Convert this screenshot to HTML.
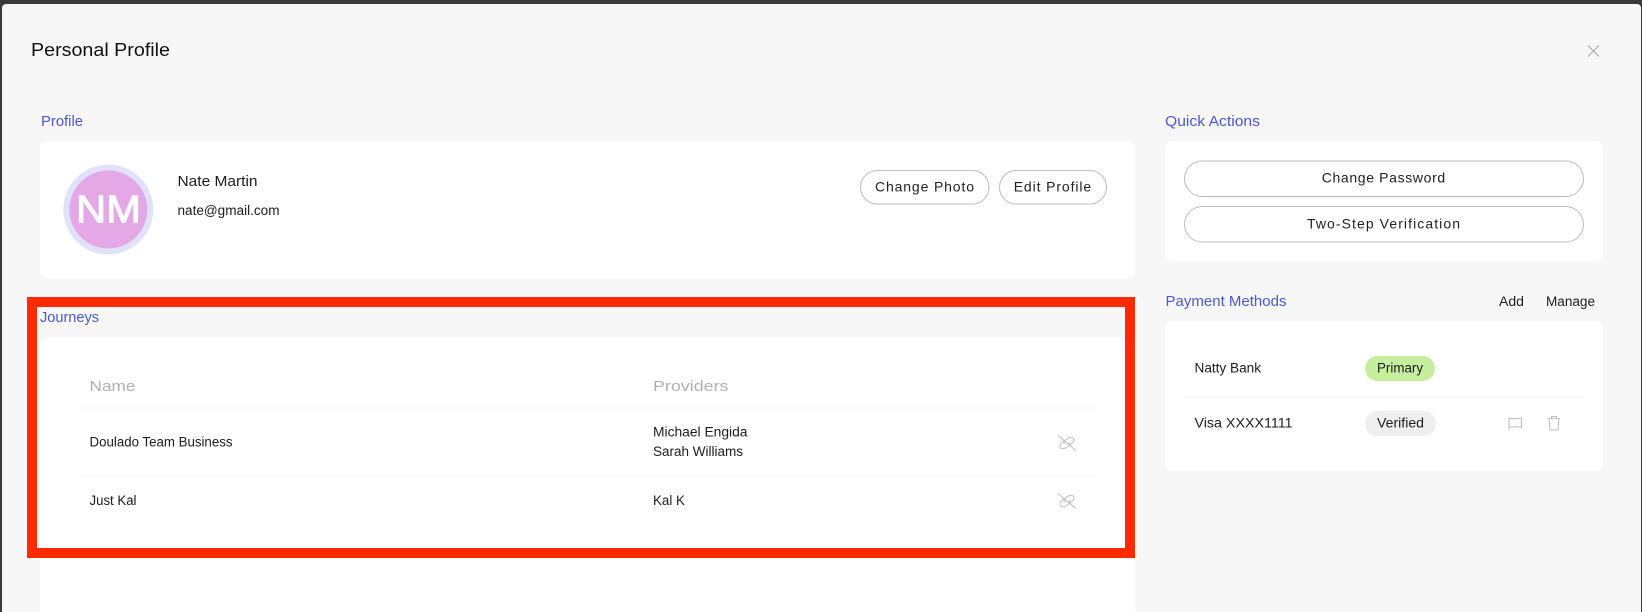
<!DOCTYPE html>
<html lang="en">
<head>
<meta charset="utf-8">
<title>Personal Profile</title>
<style>
html,body{margin:0;padding:0;width:1642px;height:612px;overflow:hidden;background:#3a3a3a}
svg{display:block}
text{font-family:"Liberation Sans",sans-serif;fill:#1c1c1c}
.t{font-size:13.5px}
.b{font-size:14px;fill:#1f1f1f}
.h{font-size:14.5px;fill:#4c57d2}
.g{font-size:15px;fill:#b0b0b0}
.btn{fill:#fff;stroke:#bcbcbc;stroke-width:1}
.ic{fill:none;stroke:#bdbdbd;stroke-width:1}
.soft{filter:blur(.35px)}
</style>
</head>
<body>
<svg width="1642" height="612" viewBox="0 0 1642 612" xmlns="http://www.w3.org/2000/svg">
  <rect width="1642" height="612" fill="#3a3a3a"/>
  <path d="M2 8 a4 4 0 0 1 4 -4 H1637 a4 4 0 0 1 4 4 V612 H2 Z" fill="#f7f7f7"/>

  <!-- cards -->
  <rect x="40" y="141" width="1095.500" height="137" rx="7" fill="#fff"/>
  <path d="M40 345 a7 7 0 0 1 7 -7 H1128.500 a7 7 0 0 1 7 7 V612 H40 Z" fill="#fff"/>
  <rect x="1165" y="141" width="438" height="120" rx="7" fill="#fff"/>
  <rect x="1165" y="322" width="438" height="148" rx="7" fill="#fff"/>

  <!-- red highlight -->
  <rect x="32" y="302" width="1098" height="251" fill="none" stroke="#ff2a00" stroke-width="10"/>

  <g class="soft">
    <text x="31" y="56" style="font-size:18px;fill:#111" textLength="139" lengthAdjust="spacingAndGlyphs">Personal Profile</text>
    <path d="M1588 45.500 L1599 56.500 M1599 45.500 L1588 56.500" style="fill:none;stroke:#a8a8a8;stroke-width:1"/>

    <text class="h" x="41" y="126" textLength="42" lengthAdjust="spacingAndGlyphs">Profile</text>
    <circle cx="108.300" cy="209.500" r="45" fill="#e0e2fa"/>
    <circle cx="108.300" cy="209.500" r="39" fill="#e4a8e6"/>
    <text x="76" y="222.700" style="font-size:39px;fill:#fff;stroke:#fff;stroke-width:1" textLength="65" lengthAdjust="spacingAndGlyphs">NM</text>
    <text x="177.500" y="186" style="font-size:15px" textLength="80" lengthAdjust="spacingAndGlyphs">Nate Martin</text>
    <text x="177.500" y="215" class="t" textLength="102" lengthAdjust="spacingAndGlyphs">nate@gmail.com</text>

    <rect class="btn" x="860.500" y="170.500" width="128.500" height="33.500" rx="16.700"/>
    <text class="b" x="875" y="191.700" textLength="99" lengthAdjust="spacing">Change Photo</text>
    <rect class="btn" x="999.500" y="170.500" width="107" height="33.500" rx="16.700"/>
    <text class="b" x="1013.700" y="191.700" textLength="77.500" lengthAdjust="spacing">Edit Profile</text>

    <text class="h" x="40" y="322" textLength="59" lengthAdjust="spacingAndGlyphs">Journeys</text>
    <text class="g" x="89.500" y="391" textLength="46" lengthAdjust="spacingAndGlyphs">Name</text>
    <text class="g" x="653" y="391" textLength="75.500" lengthAdjust="spacingAndGlyphs">Providers</text>
    <rect x="79" y="407.500" width="1017" height="1" fill="#f4f4f4"/>
    <text class="t" x="89.500" y="446.700" textLength="143" lengthAdjust="spacingAndGlyphs">Doulado Team Business</text>
    <text class="t" x="653" y="436.500" textLength="94.500" lengthAdjust="spacingAndGlyphs">Michael Engida</text>
    <text class="t" x="653" y="456" textLength="90" lengthAdjust="spacingAndGlyphs">Sarah Williams</text>
    <g class="ic" transform="translate(1067 443)">
      <path d="M-9 -7.500 L9 7.500"/>
      <path d="M-1.500 -3 L-5 -0.500 C-9 2.500 -6.500 7 -2.500 5.500 L1 3.500 C3 2.300 3.500 0.500 2.500 -1"/>
      <path d="M1.500 3 L5 0.500 C9 -2.500 6.500 -7 2.500 -5.500 L-1 -3.500 C-3 -2.300 -3.500 -0.500 -2.500 1"/>
    </g>
    <rect x="79" y="475.500" width="1017" height="1" fill="#f4f4f4"/>
    <text class="t" x="89.500" y="505" textLength="47" lengthAdjust="spacingAndGlyphs">Just Kal</text>
    <text class="t" x="653" y="505" textLength="32" lengthAdjust="spacingAndGlyphs">Kal K</text>
    <g class="ic" transform="translate(1067 501)">
      <path d="M-9 -7.500 L9 7.500"/>
      <path d="M-1.500 -3 L-5 -0.500 C-9 2.500 -6.500 7 -2.500 5.500 L1 3.500 C3 2.300 3.500 0.500 2.500 -1"/>
      <path d="M1.500 3 L5 0.500 C9 -2.500 6.500 -7 2.500 -5.500 L-1 -3.500 C-3 -2.300 -3.500 -0.500 -2.500 1"/>
    </g>

    <text class="h" x="1165" y="126" textLength="95" lengthAdjust="spacingAndGlyphs">Quick Actions</text>
    <rect class="btn" x="1184.500" y="161" width="399" height="35.500" rx="17.700"/>
    <text class="b" x="1321.700" y="182.700" textLength="123.500" lengthAdjust="spacing">Change Password</text>
    <rect class="btn" x="1184.500" y="206.500" width="399" height="35.500" rx="17.700"/>
    <text class="b" x="1307" y="228.300" textLength="153" lengthAdjust="spacing">Two-Step Verification</text>

    <text class="h" x="1165.500" y="306" textLength="121" lengthAdjust="spacingAndGlyphs">Payment Methods</text>
    <text class="t" x="1499" y="306" textLength="25" lengthAdjust="spacingAndGlyphs">Add</text>
    <text class="t" x="1546" y="306" textLength="49" lengthAdjust="spacingAndGlyphs">Manage</text>

    <text class="t" x="1194.500" y="372.300" textLength="66.500" lengthAdjust="spacingAndGlyphs">Natty Bank</text>
    <rect x="1365" y="356" width="70" height="25" rx="12.500" fill="#c5ef9f"/>
    <text class="t" x="1377" y="372.300" textLength="46" lengthAdjust="spacingAndGlyphs">Primary</text>
    <rect x="1185" y="396" width="399" height="1" fill="#f4f4f4"/>
    <text class="t" x="1194.500" y="427.300" textLength="98" lengthAdjust="spacingAndGlyphs">Visa XXXX1111</text>
    <rect x="1365" y="411" width="71" height="25" rx="12.500" fill="#eeeeee"/>
    <text class="t" x="1377" y="427.300" textLength="47" lengthAdjust="spacingAndGlyphs">Verified</text>
    <path class="ic" d="M1509 430 V418 Q1515 419.500 1521.500 418 V427.500 Q1515 426 1509 427.500"/>
    <path class="ic" d="M1548 418.500 H1560 M1551.500 418.500 V416.500 H1556.500 V418.500 M1549 418.500 L1549.800 429 Q1549.900 430 1551 430 H1557 Q1558.100 430 1558.200 429 L1559 418.500"/>
  </g>
</svg>
</body>
</html>
